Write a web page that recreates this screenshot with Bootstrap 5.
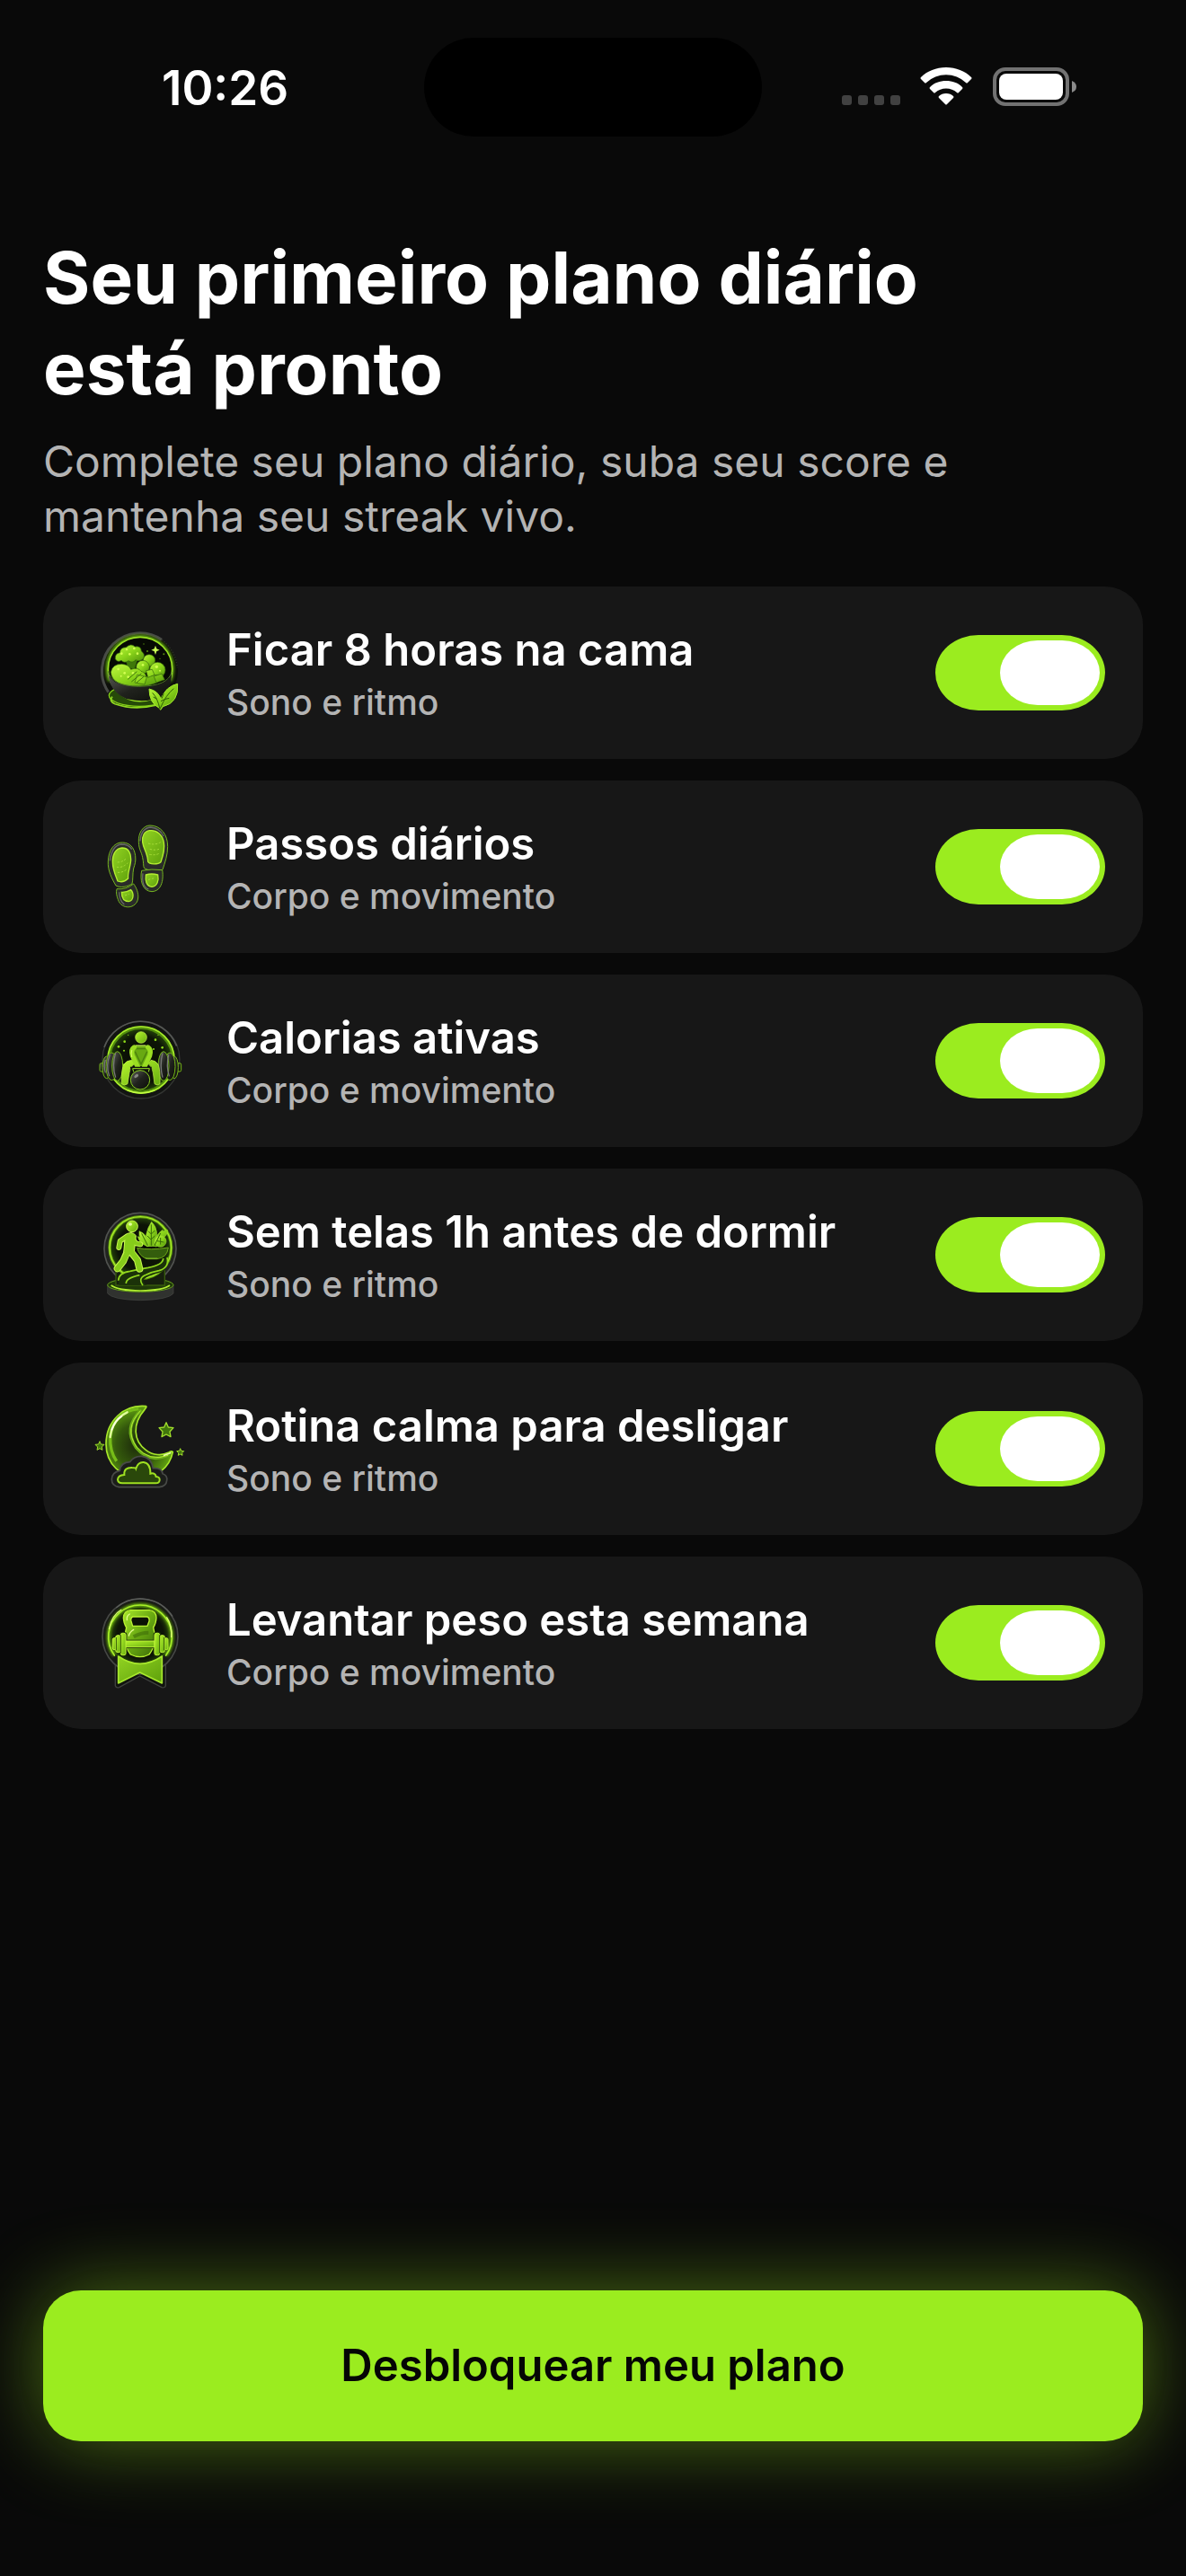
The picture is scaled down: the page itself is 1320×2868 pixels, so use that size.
<!DOCTYPE html>
<html lang="pt-BR">
<head>
<meta charset="utf-8">
<meta name="viewport" content="width=device-width, initial-scale=1">
<title>Plano diário</title>
<link href="https://cdn.jsdelivr.net/npm/bootstrap@5.3.0/dist/css/bootstrap.min.css" rel="stylesheet">
<style>
  :root { --lime: #9bec1f; --ink: #090909; --panel: #171717; --muted: #b4b4b4; }
  body { background: var(--ink); color: #fff; font-family: Inter, "Liberation Sans", sans-serif; }
  .status-bar { height: 194px; padding-top: 42px; grid-template-columns: 1fr 376px 1fr; align-items: start; }
  .status-side { height: 110px; }
  .status-start { padding-left: 180px; }
  .status-end { padding-right: 120px; }
  .clock { font-size: 53px; line-height: 64px; font-weight: 600; padding-top: 2px; }
  .island { height: 110px; background: #000; border-radius: 55px; }
  .page-body { padding: 64px 48px 150px; }
  .plan-title { font-size: 80px; line-height: 101px; font-weight: 700; margin-bottom: 23px; }
  .plan-lead { font-size: 48px; line-height: 61px; color: var(--muted); margin-bottom: 48px; }
  .goal-list { gap: 24px; }
  .goal { height: 192px; padding: 0 42px; border-radius: 42px; background: var(--panel); }
  .goal-icon { width: 130px; height: 130px; margin-right: 32px; flex: none; }
  .goal-name { font-size: 49px; line-height: 62px; font-weight: 600; }
  .goal-area { font-size: 39px; line-height: 50px; font-weight: 500; color: var(--muted); margin-top: 2px; }
  .goal-text { padding-top: 2px; }
  .form-check-input.goal-switch {
    display: flex; justify-content: flex-end; flex: none; width: 189px; height: 84px; margin: 0; padding: 6px;
    border: 0; border-radius: 48px / 42px; background: #39393d;
  }
  .form-check-input.goal-switch::before { content: ""; width: 111px; height: 72px; border-radius: 42px / 36px; background: #fff; }
  .form-check-input.goal-switch:checked { background: var(--lime); }
  .form-check-input.goal-switch:not(:checked) { justify-content: flex-start; }
  .unlock { height: 168px; border-radius: 42px; font-size: 49px; font-weight: 600; --bs-btn-bg: var(--lime); --bs-btn-color: #050505;
    --bs-btn-hover-bg: #8ad81a; --bs-btn-hover-color: #050505; box-shadow: 0 0 88px rgba(155, 236, 31, .46); }
</style>
</head>
<body class="d-flex flex-column min-vh-100">

<svg width="0" height="0" class="position-absolute" aria-hidden="true">
  <defs>
    <linearGradient id="leafy" x1="0" y1="0" x2="1" y2="1"><stop offset="0" stop-color="#c0f840"/><stop offset=".5" stop-color="#8ad41a"/><stop offset="1" stop-color="#4f900b"/></linearGradient>
    <linearGradient id="body" x1="0" y1="0" x2="1" y2="1"><stop offset="0" stop-color="#b5f52c"/><stop offset="1" stop-color="#68ad10"/></linearGradient>
    <linearGradient id="bell" x1="0" y1="0" x2="1" y2="1"><stop offset="0" stop-color="#a6e62a"/><stop offset=".5" stop-color="#68a811"/><stop offset="1" stop-color="#3a6908"/></linearGradient>
    <linearGradient id="sole" x1="0" y1="0" x2="1" y2="1"><stop offset="0" stop-color="#92d322"/><stop offset="1" stop-color="#5ea00b"/></linearGradient>
    <linearGradient id="iron" x1="0" y1="0" x2="1" y2="1"><stop offset="0" stop-color="#5c5e58"/><stop offset=".5" stop-color="#20221d"/><stop offset="1" stop-color="#0b0d08"/></linearGradient>
    <radialGradient id="pit"><stop offset="0" stop-color="#080b04"/><stop offset=".75" stop-color="#0d1506"/><stop offset="1" stop-color="#26470a"/></radialGradient>
    <radialGradient id="moonfill" cx=".45" cy=".55" r=".6"><stop offset="0" stop-color="#1d2b0b"/><stop offset=".5" stop-color="#34590c"/><stop offset="1" stop-color="#6cb312"/></radialGradient>
    <filter id="glow" x="-20%" y="-20%" width="140%" height="140%"><feGaussianBlur stdDeviation="5"/></filter>
  </defs>
</svg>

<header class="status-bar d-grid">
  <div class="status-side status-start d-flex align-items-center"><span class="clock">10:26</span></div>
  <div class="island"></div>
  <div class="status-side status-end d-flex align-items-center justify-content-end">
    <svg width="264" height="48" viewBox="0 0 264 48" role="img" aria-label="Wi-Fi e bateria">
      <g fill="#414141"><rect x="1" y="33" width="11" height="11" rx="3"/><rect x="19" y="33" width="11" height="11" rx="3"/><rect x="37" y="33" width="11" height="11" rx="3"/><rect x="55" y="33" width="11" height="11" rx="3"/></g>
      <g fill="#fff"><path d="M117 2c11 0 21 4 28 11q1 1 0 2l-4 4q-1 1-2 0a32 32 0 0 0-44 0q-1 1-2 0l-4-4q-1-1 0-2c7-7 17-11 28-11z"/><path d="M117 17c7 0 13 2 18 7q1 1 0 2l-4 4q-1 1-2 0a18 18 0 0 0-24 0q-1 1-2 0l-4-4q-1-1 0-2c5-5 11-7 18-7z"/><path d="M117 31q5 0 8 3 1 1 0 2l-7 7q-1 1-2 0l-7-7q-1-1 0-2 3-3 8-3z"/></g>
      <rect x="171" y="4" width="81" height="39" rx="12" fill="none" stroke="#727272" stroke-width="4"/><rect x="176" y="9" width="71" height="29" rx="8" fill="#fff"/><path d="M257 17q5 2 5 6.500t-5 6.500z" fill="#8a8a8a"/>
    </svg>
  </div>
</header>

<main class="page-body d-flex flex-column flex-grow-1">
  <h1 class="plan-title">Seu primeiro plano diário<br>está pronto</h1>
  <p class="plan-lead">Complete seu plano diário, suba seu score e<br>mantenha seu streak vivo.</p>

  <ul class="goal-list list-unstyled d-flex flex-column mb-5">
    <li class="goal d-flex align-items-center">
      <svg class="goal-icon" viewBox="0 12 390 390" aria-hidden="true">
        <circle cx="197" cy="201" r="127" fill="#0d0f0b"/><path d="M92 272A127 127 0 0 1 270 97" fill="none" stroke="#484a47" stroke-width="9"/><path d="M270 97a127 127 0 0 1 52 93" fill="none" stroke="#292b28" stroke-width="4" stroke-dasharray="5 4"/>
        <ellipse cx="195" cy="283" rx="101" ry="36" fill="#264a09" stroke="#83cf17" stroke-width="4"/>
        <path d="M97 235A108 108 0 1 1 297 235" fill="none" stroke="#5c9f0d" stroke-width="13" filter="url(#glow)"/>
        <circle cx="198" cy="195" r="107" fill="#070a04" stroke="#9be323" stroke-width="5"/>
        <path d="M249 116l4 11 10 4-10 4-4 12-4-12-10-4 10-4z" fill="#c9ff55"/><g fill="#5a950f"><circle cx="222" cy="135" r="3"/><circle cx="277" cy="145" r="3"/><circle cx="210" cy="111" r="2"/><circle cx="264" cy="160" r="2"/></g>
        <g fill="url(#leafy)" stroke="#33650a" stroke-width="2"><circle cx="228" cy="166" r="20"/><circle cx="207" cy="188" r="22"/><circle cx="256" cy="198" r="26"/>
        <path d="M157 190l-8-30 15 10 8-15 7 14 12-12-12 38z" fill="#3f780a"/>
        <path d="M115 161q-2-18 15-21 1-18 21-18 16-15 30-2 20-3 21 15 16 11 5 27-14 10-24 2-10 13-24 3-14 10-24-1-12 8-20-5z"/>
        <path d="M100 205q5-27 37-27 24 2 30 18 24-9 34 6 15 4 17 18 30-8 58-6-10 36-82 38-90 2-94-47z"/><path d="M218 200l20-4 8 18-22 9zM244 219l26-9 10 20-28 10zM188 214l32 7-7 25-33-6z"/></g>
        <g fill="#d2ff52"><circle cx="136" cy="143" r="4"/><circle cx="153" cy="129" r="4"/><circle cx="178" cy="126" r="4"/><circle cx="189" cy="143" r="4"/><circle cx="163" cy="145" r="4"/><circle cx="125" cy="195" r="4"/><circle cx="146" cy="208" r="4"/><circle cx="134" cy="218" r="3"/><circle cx="174" cy="208" r="4"/><circle cx="253" cy="187" r="5"/><circle cx="207" cy="181" r="4"/><circle cx="264" cy="200" r="3"/><circle cx="158" cy="221" r="4"/></g>
        <path d="M157 229l30-26M169 237l33-27M186 240l24-20" stroke="#3f750b" stroke-width="3"/>
        <path d="M91 204q5 47 103 50 101-1 109-48 3 54-34 78-42 26-116 11-61-26-62-91z" fill="url(#iron)"/><path d="M91 202q11 49 103 51 99-1 109-49" fill="none" stroke="#50742a" stroke-width="3"/>
        <path d="M105 287q-13 15 9 24 64 23 140 4" fill="none" stroke="#91dc20" stroke-width="5"/>
        <g fill="url(#leafy)" stroke="#a3e92b" stroke-width="3"><path d="M262 325q-34-17-34-64 31 7 39 34 17-43 56-51 5 63-49 76l-8 11z"/></g><path d="M239 274q17 17 25 54 21-49 46-68M267 302q13-8 28-10M270 293l7-18M255 296l-13-8" fill="none" stroke="#305e07" stroke-width="3"/>
      </svg>
      <div class="goal-text flex-grow-1"><label class="goal-name d-block" for="goal-sleep">Ficar 8 horas na cama</label><div class="goal-area">Sono e ritmo</div></div>
      <input class="form-check-input goal-switch" type="checkbox" role="switch" id="goal-sleep" checked>
    </li>

    <li class="goal d-flex align-items-center">
      <svg class="goal-icon" viewBox="0 15 390 390" aria-hidden="true">
        <g fill="#2a2c29" stroke="#75b51f" stroke-width="3">
          <path d="M231 72c-23 0-40 24-38 56 1 26 9 31 13 51 4 17 2 28 5 35 10 10 48 10 62 6 8-25 17-49 17-78 0-39-23-70-59-70z"/>
          <path d="M203 223q33-7 69-2c4 24 2 70-35 72-34-1-40-43-34-70z"/>
          <path d="M140 129c-31-2-48 29-49 63-2 31 13 58 26 81 15 9 40 3 54-6 4-15 1-31 5-51 5-16 8-23 6-43-4-29-20-43-42-44z"/>
          <path d="M120 284q31 3 56-17c9 12 17 30 15 48-4 36-56 41-67 4-5-13-7-24-4-35z"/>
        </g>
        <g fill="none" stroke="#676966" stroke-width="4"><path d="M198 124q3-42 34-46 32 3 44 30"/><path d="M97 190q7-51 38-55 25 0 35 17"/><path d="M207 232q-5 46 19 53M128 295q1 30 17 41"/></g>
        <g fill="url(#sole)" stroke="#b4ef31" stroke-width="4">
          <path d="M229 89c-17 2-26 20-23 39 3 23 17 36 18 65 5 11 35 9 43 1 7-20 14-44 10-65-4-26-24-43-48-40z"/>
          <path d="M217 237q19-6 40 0c4 19-2 38-20 40-20-2-22-23-20-40z"/>
          <path d="M138 147c-23 1-33 25-32 47 0 24 9 43 17 64 13 5 27-1 35-9-3-19 9-42 9-64-1-25-10-38-29-38z"/>
          <path d="M136 295q16 1 31-8c10 10 11 36-7 39-17 0-24-14-24-31z"/>
        </g>
        <g fill="none" stroke="#a5dc37" stroke-width="3" stroke-dasharray="7 5"><path d="M225 132q23 7 41-4M230 151q22 6 35-2M229 169q22 4 35-5M122 195q18 0 32-15M120 211q18 4 37-14M123 229q16 1 29-10M225 253l20-5M147 306l14-5"/></g>
      </svg>
      <div class="goal-text flex-grow-1"><label class="goal-name d-block" for="goal-steps">Passos diários</label><div class="goal-area">Corpo e movimento</div></div>
      <input class="form-check-input goal-switch" type="checkbox" role="switch" id="goal-steps" checked>
    </li>

    <li class="goal d-flex align-items-center">
      <svg class="goal-icon" viewBox="0 18 390 390" aria-hidden="true">
        <circle cx="201" cy="210" r="129" fill="#121411" stroke="#343633" stroke-width="4"/><path d="M78 168A129 129 0 0 1 320 164" fill="none" stroke="#555754" stroke-width="5"/>
        <circle cx="201" cy="210" r="108" fill="url(#pit)" stroke="#518d0c" stroke-width="12"/><circle cx="201" cy="210" r="111" fill="none" stroke="#a9eb2c" stroke-width="5"/>
        <g fill="#8fdc1a"><circle cx="146" cy="149" r="4"/><circle cx="126" cy="166" r="4"/><circle cx="158" cy="127" r="2"/><circle cx="249" cy="143" r="4"/><circle cx="272" cy="169" r="4"/><circle cx="243" cy="174" r="3"/><circle cx="258" cy="127" r="2"/><circle cx="144" cy="179" r="3"/></g>
        <path d="M120 227h50M235 227h50" stroke="#9be323" stroke-width="7"/>
        <g fill="url(#iron)" stroke="#73b516" stroke-width="3"><rect x="63" y="221" width="18" height="28" rx="5"/><rect x="318" y="221" width="17" height="28" rx="5"/><ellipse cx="86" cy="235" rx="14" ry="37"/><ellipse cx="103" cy="232" rx="19" ry="46"/><ellipse cx="122" cy="231" rx="18" ry="49"/><ellipse cx="312" cy="235" rx="13" ry="37"/><ellipse cx="297" cy="232" rx="18" ry="46"/><ellipse cx="276" cy="231" rx="18" ry="49"/></g>
        <g fill="none" stroke="#777976" stroke-width="4"><path d="M97 193q-15 37-2 72M116 187q-13 41 0 82M273 187q-11 41 0 82M293 193q-9 37 2 72M82 210q-7 20 0 43"/></g>
        <g fill="url(#body)" stroke="#c4f54a" stroke-width="2"><circle cx="201" cy="135" r="19"/>
          <path d="M136 290q-2-45 8-65 8-13 26-14l9 12q-16 12-17 30l-6 37q-10 8-20 0zM264 290q2-45-6-65-8-13-24-14l-9 12q15 12 16 30l5 37q9 8 18 0z"/></g>
        <path d="M176 162h50l9 20-22 50h-24l-23-50z" fill="#69a912"/>
        <path d="M180 173h42M181 182l20 42 20-42" fill="none" stroke="#4a800c" stroke-width="4"/>
        <g fill="none" stroke="#9ade22" stroke-width="16" stroke-linecap="round" stroke-linejoin="round"><path d="M178 168q-12 8-6 28l18 38M224 168q12 8 6 28l-18 38"/></g>
        <path d="M170 178q-4 12 0 22M184 162h32" fill="none" stroke="#d8ff64" stroke-width="3" stroke-linecap="round"/>
        <path d="M177 261l-5-22h57l-5 22" fill="none" stroke="#10130d" stroke-width="12"/><path d="M176 250l-3-11h56l-3 11" fill="none" stroke="#9be323" stroke-width="3"/>
        <circle cx="198" cy="277" r="32" fill="url(#iron)" stroke="#8ad11f" stroke-width="3"/><ellipse cx="185" cy="264" rx="8" ry="5" fill="#858882" transform="rotate(-35 185 264)"/><path d="M155 311q45 20 92 0" fill="none" stroke="#c2ff43" stroke-width="4"/>
      </svg>
      <div class="goal-text flex-grow-1"><label class="goal-name d-block" for="goal-calories">Calorias ativas</label><div class="goal-area">Corpo e movimento</div></div>
      <input class="form-check-input goal-switch" type="checkbox" role="switch" id="goal-calories" checked>
    </li>

    <li class="goal d-flex align-items-center">
      <svg class="goal-icon" viewBox="0 21 390 390" aria-hidden="true">
        <circle cx="198" cy="196" r="120" fill="#222420" stroke="#50524f" stroke-width="5"/>
        <path d="M89 316v29q16 21 110 23 94-2 110-23v-29z" fill="#30322f" stroke="#454744" stroke-width="2"/><ellipse cx="199" cy="317" rx="110" ry="23" fill="#203a09" stroke="#659e1b" stroke-width="3"/><path d="M101 318q22 17 98 18 76-1 98-18" fill="none" stroke="#b2ef32" stroke-width="5"/>
        <path d="M117 268v50h163v-50" fill="#161f0d" stroke="#365b0d" stroke-width="4"/>
        <circle cx="199" cy="192" r="103" fill="url(#pit)" stroke="#619f0d" stroke-width="10"/><circle cx="199" cy="192" r="103" fill="none" stroke="#a9e92b" stroke-width="4"/>
        <path d="M127 317q-6-36 33-45 24-8 57-11 55-7 69-37 15 38-27 53-36 8-48 21-9 10 10 20z" fill="#1b3209"/><path d="M125 302q1-26 39-31 32-8 61-12 50-9 50-31M207 318q-18-24 11-35 17-9 43-14 35-10 27-44M151 312q-1-18 45-28" fill="none" stroke="#91d71d" stroke-width="5"/>
        <g fill="url(#leafy)" stroke="#96d72b" stroke-width="2"><path d="M222 188q-14-40 14-82 31 30 8 81z"/><path d="M220 188q-29-22-25-51 28 9 32 49zM241 186q7-37 32-53 11 36-21 56z"/><path d="M190 155q23 4 35 33-29-8-35-33zM263 150q4-15 27-16-3 22-20 28z"/><circle cx="266" cy="171" r="19"/></g><path d="M235 115v70M225 137l10 10 12-12M222 153l12 12 13-12M203 145l20 40M266 144l-20 41M255 170l22 4M266 159v23" stroke="#386b09" stroke-width="3" fill="none"/>
        <path d="M188 193q44 9 104-1-4 34-38 38h-31q-28-7-35-37z" fill="#345d0d" stroke="#6da717" stroke-width="3"/><path d="M215 228h41" stroke="#80ba2a" stroke-width="3"/>
        <g fill="none" stroke="#c7f750" stroke-width="24" stroke-linecap="round" stroke-linejoin="round"><path d="M155 154l-24 16-4 22M169 159l15 19 15 3" stroke-width="18"/><path d="M157 162v39l-16 37-19 24M165 204l24 30 7 29"/></g>
        <path d="M148 150q21-16 36 2l-6 54-35 3z" fill="#86cc1a" stroke="#c7f750" stroke-width="3"/>
        <g fill="none" stroke="#86cc1a" stroke-width="18" stroke-linecap="round" stroke-linejoin="round"><path d="M155 154l-24 16-4 22M169 159l15 19 15 3" stroke-width="12"/><path d="M159 162v39l-18 37-19 24M165 202l24 32 7 29"/></g>
        <circle cx="171" cy="121" r="19" fill="url(#body)" stroke="#c7f750" stroke-width="3"/><ellipse cx="165" cy="114" rx="6" ry="5" fill="#e2ffa0"/>
      </svg>
      <div class="goal-text flex-grow-1"><label class="goal-name d-block" for="goal-screens">Sem telas 1h antes de dormir</label><div class="goal-area">Sono e ritmo</div></div>
      <input class="form-check-input goal-switch" type="checkbox" role="switch" id="goal-screens" checked>
    </li>

    <li class="goal d-flex align-items-center">
      <svg class="goal-icon" viewBox="0 24 390 390" aria-hidden="true">
        <path d="M218 77C143 70 84 127 84 203c0 66 50 113 112 113 57 0 100-33 111-86q-5-5-15 2c-20 10-51 10-75-9-42-31-46-87-4-135q8-10 5-11z" fill="url(#moonfill)" stroke="#a7e72a" stroke-width="5"/>
        <path d="M202 89q-63 60-17 127 46 55 110 22" fill="none" stroke="#6cae18" stroke-width="10"/><path d="M199 92q-56 60-13 121 43 51 105 28" fill="none" stroke="#b6ed35" stroke-width="3"/>
        <path d="M193 86q-86 9-95 93-2 49 21 81" fill="none" stroke="#77bd18" stroke-width="10"/><path d="M98 180q7-58 57-83" fill="none" stroke="#e1fc9b" stroke-width="7" stroke-linecap="round"/><path d="M103 155q12-32 33-44" fill="none" stroke="#fbffe8" stroke-width="5" stroke-linecap="round"/><path d="M278 241l21-8" stroke="#eaffaa" stroke-width="5" stroke-linecap="round"/>
        <g fill="#41760d" stroke="#9fdc2c" stroke-width="4" stroke-linejoin="round"><path d="M285 131l7 16 17 2-12 13 3 17-15-8-15 8 3-17-12-13 17-2z"/><path d="M63 194l4 10 11 1-8 8 2 10-9-5-9 5 2-10-8-8 11-1z" stroke-width="3"/><path d="M332 218l3 8 9 1-6 6 1 8-7-4-7 4 1-8-6-6 9-1z" stroke-width="3"/></g>
        <path d="M127 347q-24-4-24-26 1-24 27-29 3-28 34-29 13-20 39-19 32 3 38 40 29-2 32 18 17 6 14 23-2 19-25 22z" fill="#1b1d1a" stroke="#484a47" stroke-width="5"/>
        <path d="M138 334q-14-1-15-12 1-15 22-16-2-25 26-24 12 0 13 3 7-22 25-21 24 3 23 38 17-4 19 10 13 1 12 12-1 10-13 10z" fill="#2a480b" stroke="#9fe021" stroke-width="6"/>
      </svg>
      <div class="goal-text flex-grow-1"><label class="goal-name d-block" for="goal-calm">Rotina calma para desligar</label><div class="goal-area">Sono e ritmo</div></div>
      <input class="form-check-input goal-switch" type="checkbox" role="switch" id="goal-calm" checked>
    </li>

    <li class="goal d-flex align-items-center">
      <svg class="goal-icon" viewBox="0 27 390 390" aria-hidden="true">
        <path d="M115 275v91q3 8 13 5l69-38 73 38q12 2 13-6v-91" fill="#10130e" stroke="#40423f" stroke-width="4"/>
        <circle cx="198" cy="201" r="126" fill="#171916" stroke="#454744" stroke-width="5"/><path d="M118 105A126 126 0 0 1 306 134" fill="none" stroke="#5c5e5b" stroke-width="4"/>
        <circle cx="198" cy="197" r="104" fill="url(#pit)"/><path d="M112 264A106 106 0 1 1 284 264" fill="none" stroke="#64a50e" stroke-width="13" filter="url(#glow)"/><path d="M112 264A106 106 0 1 1 284 264" fill="none" stroke="#a8ef28" stroke-width="5" stroke-linecap="round"/><path d="M94 177q9-48 42-66M286 136q20 29 16 68" fill="none" stroke="#dcff78" stroke-width="4"/>
        <path d="M125 267q72 50 146 0v90l-74-36-72 36z" fill="url(#sole)" stroke="#a8e92d" stroke-width="5" stroke-linejoin="round"/>
        <path fill-rule="evenodd" d="M166 113h62q24 3 24 26-1 19-10 32 14 55-14 90-30 16-62 0-28-35-14-90-9-13-10-32 1-23 24-26zM174 135q-9 3-6 15l5 16h49l6-16q2-12-7-15z" fill="url(#bell)" stroke="#b9f231" stroke-width="4"/><path d="M163 126q-11 5-9 20M176 178q-13 8-16 20" fill="none" stroke="#e3ff8d" stroke-width="4" stroke-linecap="round"/><path d="M176 202q24-14 50-14" fill="none" stroke="#3d6c09" stroke-width="12" opacity=".6"/>
        <g fill="none" stroke="#1c3306" stroke-width="8"><rect x="150" y="216" width="96" height="20"/><rect x="132" y="190" width="18" height="73" rx="6"/><rect x="246" y="190" width="18" height="73" rx="6"/></g>
        <g fill="url(#body)" stroke="#bdf337" stroke-width="3"><rect x="148" y="216" width="98" height="20"/><rect x="106" y="206" width="13" height="39" rx="5"/><rect x="116" y="197" width="17" height="57" rx="7"/><rect x="133" y="190" width="17" height="73" rx="6"/><rect x="246" y="190" width="17" height="73" rx="6"/><rect x="264" y="197" width="16" height="57" rx="6"/><rect x="279" y="206" width="12" height="39" rx="5"/></g>
        <path d="M133 196v61M263 196v61M118 204v43M278 204v43" stroke="#2c5207" stroke-width="3"/>
      </svg>
      <div class="goal-text flex-grow-1"><label class="goal-name d-block" for="goal-weights">Levantar peso esta semana</label><div class="goal-area">Corpo e movimento</div></div>
      <input class="form-check-input goal-switch" type="checkbox" role="switch" id="goal-weights" checked>
    </li>
  </ul>

  <button type="button" class="btn unlock w-100 mt-auto">Desbloquear meu plano</button>
</main>

<script src="https://cdn.jsdelivr.net/npm/bootstrap@5.3.0/dist/js/bootstrap.bundle.min.js"></script>
</body>
</html>
